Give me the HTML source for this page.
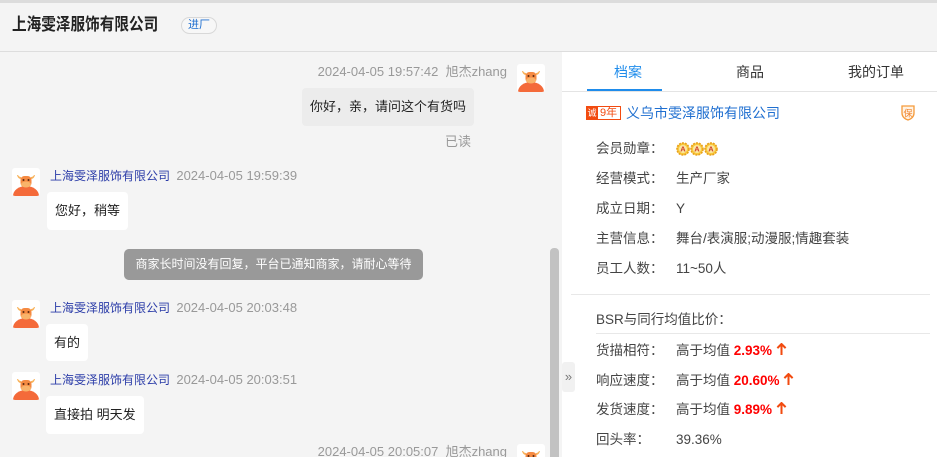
<!DOCTYPE html>
<html><head><meta charset="utf-8"><style>
*{margin:0;padding:0;box-sizing:border-box}
html,body{width:937px;height:457px;overflow:hidden}
body{background:#f4f4f4;font-family:"Liberation Sans","Noto Sans CJK SC",sans-serif;position:relative;color:#333}
.a{position:absolute;white-space:nowrap;line-height:18px}
.av{position:absolute;width:28px;height:28px;background:#fff;border-radius:3px;overflow:hidden}
.t{font-size:13px;color:#999}
.n{font-size:12px;color:#2b3ca8}
.b{position:absolute;background:#fff;border-radius:4px;font-size:13px;color:#222;line-height:38px;padding:0 8px}
.l{font-size:13.5px;color:#444}
.v{font-size:13.5px;color:#444}
.r{color:#f00;font-weight:bold}
</style></head><body>
<svg width="0" height="0" style="position:absolute"><defs>
<symbol id="bull" viewBox="0 0 28 28">
<ellipse cx="14" cy="28" rx="13" ry="10" fill="#f46a3a"/>
<path d="M5 7 Q6 11 9 11 L9 9 Q7 9 6 7Z" fill="#f8b25a"/>
<path d="M23 7 Q22 11 19 11 L19 9 Q21 9 22 7Z" fill="#f8b25a"/>
<rect x="8.5" y="8" width="11" height="11" rx="4" fill="#f58a42"/>
<ellipse cx="14" cy="16.5" rx="5" ry="3" fill="#f9b36a"/>
<circle cx="11.5" cy="12" r="1" fill="#5a2a10"/><circle cx="16.5" cy="12" r="1" fill="#5a2a10"/>
</symbol>
<symbol id="up" viewBox="0 0 12 14"><path d="M6 1 L6 13 M1.5 5.5 L6 1 L10.5 5.5" stroke="#f24b10" stroke-width="2.2" fill="none"/></symbol>
</defs></svg>

<div class="a" style="left:0;top:0;width:937px;height:3px;background:#dcdcdc"></div>
<div class="a" style="left:12px;top:16px;font-size:17px;font-weight:bold;color:#222;transform:scaleX(0.86);transform-origin:0 0">上海雯泽服饰有限公司</div>
<div class="a" style="left:181px;top:17px;width:36px;height:17px;border:1px solid #d8d8d8;border-radius:9px;font-size:11px;color:#1f6fd0;text-align:center;line-height:15px;background:#f7f7f7">进厂</div>
<div class="a" style="left:0;top:51px;width:937px;height:1px;background:#ddd"></div>

<div class="a t" style="right:430px;top:63px">2024-04-05 19:57:42&nbsp;&nbsp;旭杰zhang</div>
<div class="av" style="left:517px;top:64px"><svg width="28" height="28"><use href="#bull"/></svg></div>
<div class="b" style="left:302px;top:88px;height:38px;background:#ececec;width:172px;padding:0 0 0 8px">你好，亲，请问这个有货吗</div>
<div class="a t" style="left:445px;top:133px">已读</div>

<div class="av" style="left:12px;top:168px"><svg width="28" height="28"><use href="#bull"/></svg></div>
<div class="a n" style="left:50px;top:167px">上海雯泽服饰有限公司 <span style="color:#999;font-size:13px;margin-left:3px">2024-04-05 19:59:39</span></div>
<div class="b" style="left:47px;top:192px;height:38px">您好，稍等</div>

<div class="a" style="left:124px;top:249px;width:299px;height:31px;background:#999;border-radius:5px;color:#fff;font-size:12px;line-height:31px;text-align:center">商家长时间没有回复，平台已通知商家，请耐心等待</div>

<div class="av" style="left:12px;top:300px"><svg width="28" height="28"><use href="#bull"/></svg></div>
<div class="a n" style="left:50px;top:299px">上海雯泽服饰有限公司 <span style="color:#999;font-size:13px;margin-left:3px">2024-04-05 20:03:48</span></div>
<div class="b" style="left:46px;top:324px;height:37px">有的</div>

<div class="av" style="left:12px;top:372px"><svg width="28" height="28"><use href="#bull"/></svg></div>
<div class="a n" style="left:50px;top:371px">上海雯泽服饰有限公司 <span style="color:#999;font-size:13px;margin-left:3px">2024-04-05 20:03:51</span></div>
<div class="b" style="left:46px;top:396px;height:38px">直接拍 明天发</div>

<div class="a t" style="right:430px;top:443px;height:14px;overflow:hidden">2024-04-05 20:05:07&nbsp;&nbsp;旭杰zhang</div>
<div class="av" style="left:517px;top:444px;height:13px;border-radius:3px 3px 0 0"><svg width="28" height="28"><use href="#bull"/></svg></div>

<div class="a" style="left:550px;top:248px;width:9px;height:209px;background:#c2c2c2;border-radius:4px 4px 0 0"></div>

<div class="a" style="left:562px;top:52px;width:375px;height:405px;background:#fff"></div>
<div class="a" style="left:562px;top:362px;width:13px;height:30px;background:#f1f1f1;border-radius:3px;font-size:13px;color:#777;line-height:30px;text-align:center">»</div>
<div class="a" style="left:614px;top:63px;font-size:14px;color:#1f8ceb">档案</div>
<div class="a" style="left:736px;top:63px;font-size:14px;color:#333">商品</div>
<div class="a" style="left:848px;top:63px;font-size:14px;color:#333">我的订单</div>
<div class="a" style="left:562px;top:91px;width:375px;height:1px;background:#e4e4e4"></div>
<div class="a" style="left:587px;top:89px;width:75px;height:2px;background:#1f8ceb"></div>

<div class="a" style="left:586px;top:106px;width:35px;height:14px;border:1px solid #f24b10;background:#fff"></div>
<div class="a" style="left:586px;top:106px;width:12px;height:14px;background:#f24b10;color:#fff;font-size:9px;line-height:14px;text-align:center">诚</div>
<div class="a" style="left:600px;top:106px;font-size:11px;color:#f24b10;line-height:14px">9年</div>
<div class="a" style="left:626px;top:104px;font-size:14px;color:#1f6fd0">义乌市雯泽服饰有限公司</div>
<svg class="a" style="left:900px;top:104px" width="16" height="17" viewBox="0 0 16 17"><path d="M2 2 L14 2 L14 9 Q14 14 8 16 Q2 14 2 9Z" fill="#fff3e4" stroke="#f59a3a" stroke-width="1.3"/><text x="8" y="12.5" font-size="9" text-anchor="middle" fill="#f0822a" font-family="Noto Sans CJK SC">保</text></svg>

<div class="a l" style="left:596px;top:140px">会员勋章：</div>
<div class="a" style="left:676px;top:141px">
<svg width="42" height="16" viewBox="0 0 42 16"><g fill="#f9c93c" stroke="#e8a01a" stroke-width="1.6" stroke-dasharray="2 1"><circle cx="7" cy="8" r="6"/><circle cx="21" cy="8" r="6"/><circle cx="35" cy="8" r="6"/></g><g fill="#fbe7a0"><circle cx="7" cy="8" r="4"/><circle cx="21" cy="8" r="4"/><circle cx="35" cy="8" r="4"/></g><g font-size="7.5" fill="#d0402a" font-weight="bold" text-anchor="middle" font-family="Liberation Sans"><text x="7" y="10.7">A</text><text x="21" y="10.7">A</text><text x="35" y="10.7">A</text></g></svg></div>
<div class="a l" style="left:596px;top:170px">经营模式：</div><div class="a v" style="left:676px;top:170px">生产厂家</div>
<div class="a l" style="left:596px;top:200px">成立日期：</div><div class="a v" style="left:676px;top:200px">Y</div>
<div class="a l" style="left:596px;top:230px">主营信息：</div><div class="a v" style="left:676px;top:230px">舞台/表演服;动漫服;情趣套装</div>
<div class="a l" style="left:596px;top:260px">员工人数：</div><div class="a v" style="left:676px;top:260px">11~50人</div>
<div class="a" style="left:571px;top:294px;width:359px;height:1px;background:#e8e8e8"></div>
<div class="a l" style="left:596px;top:311px">BSR与同行均值比价：</div>
<div class="a" style="left:596px;top:333px;width:334px;height:1px;background:#e8e8e8"></div>
<div class="a l" style="left:596px;top:342px">货描相符：</div><div class="a v" style="left:676px;top:342px">高于均值 <span class="r">2.93%</span> <svg width="11" height="13" style="vertical-align:-1px"><use href="#up"/></svg></div>
<div class="a l" style="left:596px;top:372px">响应速度：</div><div class="a v" style="left:676px;top:372px">高于均值 <span class="r">20.60%</span> <svg width="11" height="13" style="vertical-align:-1px"><use href="#up"/></svg></div>
<div class="a l" style="left:596px;top:401px">发货速度：</div><div class="a v" style="left:676px;top:401px">高于均值 <span class="r">9.89%</span> <svg width="11" height="13" style="vertical-align:-1px"><use href="#up"/></svg></div>
<div class="a l" style="left:596px;top:431px">回头率：</div><div class="a v" style="left:676px;top:431px">39.36%</div>
</body></html>
